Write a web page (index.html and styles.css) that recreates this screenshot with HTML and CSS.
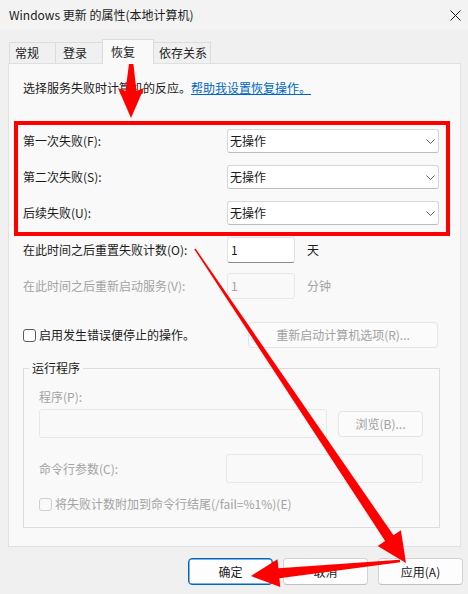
FILE: index.html
```html
<!DOCTYPE html>
<html lang="zh-CN">
<head>
<meta charset="utf-8">
<title>Windows 更新 的属性(本地计算机)</title>
<link rel="stylesheet" href="styles.css">
</head>
<body>
<div class="window">
  <div class="titlebar">
    <span class="title">Windows 更新 的属性(本地计算机)</span>
    <svg class="close" width="11" height="11" viewBox="0 0 11 11"><path d="M0.5 0.5L10.5 10.5M10.5 0.5L0.5 10.5" stroke="#1b1b1b" stroke-width="1" fill="none"/></svg>
  </div>
  <div class="content">
    <div class="tabs">
      <div class="tab t1">常规</div>
      <div class="tab t2">登录</div>
      <div class="tab t3 active">恢复</div>
      <div class="tab t4">依存关系</div>
    </div>
    <div class="panel">
      <div class="intro">选择服务失败时计算机的反应。<a class="link">帮助我设置恢复操作。</a></div>
      <div class="fails">
        <div class="row">
          <span class="label">第一次失败(F):</span>
          <div class="select"><span>无操作</span><svg class="chev" width="9" height="5" viewBox="0 0 9 5"><path d="M0.5 0.5L4.5 4.5L8.5 0.5" stroke="#5f5f5f" stroke-width="1" fill="none"/></svg></div>
        </div>
        <div class="row">
          <span class="label">第二次失败(S):</span>
          <div class="select"><span>无操作</span><svg class="chev" width="9" height="5" viewBox="0 0 9 5"><path d="M0.5 0.5L4.5 4.5L8.5 0.5" stroke="#5f5f5f" stroke-width="1" fill="none"/></svg></div>
        </div>
        <div class="row">
          <span class="label">后续失败(U):</span>
          <div class="select"><span>无操作</span><svg class="chev" width="9" height="5" viewBox="0 0 9 5"><path d="M0.5 0.5L4.5 4.5L8.5 0.5" stroke="#5f5f5f" stroke-width="1" fill="none"/></svg></div>
        </div>
      </div>
      <div class="nums">
        <div class="row">
          <span class="label">在此时间之后重置失败计数(O):</span>
          <div class="input">1</div>
          <span class="unit">天</span>
        </div>
        <div class="row disabled">
          <span class="label">在此时间之后重新启动服务(V):</span>
          <div class="input dis">1</div>
          <span class="unit">分钟</span>
        </div>
      </div>
      <div class="checkrow">
        <div class="check"><span class="box"></span><span>启用发生错误便停止的操作。</span></div>
        <div class="btn restart">重新启动计算机选项(R)...</div>
      </div>
      <fieldset class="group">
        <legend>运行程序</legend>
        <div class="glabel">程序(P):</div>
        <div class="progrow">
          <div class="input dis prog"></div>
          <div class="btn browse">浏览(B)...</div>
        </div>
        <div class="cmdrow">
          <span class="cmdlabel">命令行参数(C):</span>
          <div class="input dis cmd"></div>
        </div>
        <div class="check dcheck"><span class="box"></span><span>将失败计数附加到命令行结尾(/fail=%1%)(E)</span></div>
      </fieldset>
    </div>
    <div class="buttons">
      <div class="btn dlg ok">确定</div>
      <div class="btn dlg">取消</div>
      <div class="btn dlg">应用(A)</div>
    </div>
  </div>
  <div class="redbox"></div>
  <svg class="arrows" width="468" height="594" viewBox="0 0 468 594">
    <polygon points="130,56 132.5,56 136.5,91 144,88 131,118 118,88 125.5,91" fill="#ff0000"/>
    <polygon points="195.6,248.6 393.5,535.3 400.9,530.3 406,563 377.7,545.9 385.1,540.9 194.4,249.4" fill="#ff0000"/>
    <polygon points="400.1,562.2 279.4,578.2 280.3,587.1 251,576 277.5,559.3 278.4,568.2 399.9,559.8" fill="#ff0000"/>
  </svg>
</div>
</body>
</html>
```
FILE: styles.css
```css
* { box-sizing: border-box; }
html, body { margin: 0; padding: 0; }
body {
  width: 468px;
  height: 594px;
  overflow: hidden;
  background: #f0f0f0;
  font-family: "Noto Sans CJK SC", "Microsoft YaHei", sans-serif;
  font-size: 12px;
  line-height: 16px;
  color: #1b1b1b;
}
.window { position: relative; width: 468px; height: 594px; }

.titlebar {
  height: 30px;
  background: #f3f3f3;
  display: flex;
  align-items: center;
  justify-content: space-between;
  padding: 0 7px 0 9px;
}
.title { font-size: 12px; }

.content { padding: 9px 6px 0 8px; }

.tabs {
  display: flex;
  align-items: flex-end;
  height: 24px;
  margin-left: 1px;
}
.tab {
  height: 21px;
  line-height: 20px;
  border-top: 1px solid #dcdcdc;
  border-right: 1px solid #dcdcdc;
  background: #f0f0f0;
  white-space: nowrap;
}
.t1 { width: 47px; border-left: 1px solid #dcdcdc; padding-left: 5px; }
.t2 { width: 47px; padding-left: 7px; }
.t3 { width: 52px; margin-left: -1px; padding-left: 8px; }
.t4 { width: 57px; padding-left: 5px; }
.tab.active {
  position: relative;
  z-index: 1;
  height: 25px;
  margin-bottom: -1px;
  background: #f9f9f9;
  border-left: 1px solid #dcdcdc;
  line-height: 24px;
  padding-bottom: 1px;
}

.panel {
  height: 484px;
  margin-right: 1px;
  border: 1px solid #e0e0e0;
  background: #f9f9f9;
  padding: 0 0 0 14px;
  display: flex;
  flex-direction: column;
}
.intro { margin-top: 16px; height: 16px; white-space: nowrap; }
.link { color: #0067c0; text-decoration: underline; }

.row { display: flex; align-items: center; }
.label { width: 204px; white-space: nowrap; }

.fails { margin-top: 33px; display: flex; flex-direction: column; gap: 12px; }
.select {
  width: 212px;
  height: 24px;
  background: #ffffff;
  border: 1px solid #d6d6d6;
  border-bottom-color: #bdbdbd;
  border-radius: 3px;
  display: flex;
  align-items: center;
  justify-content: space-between;
  padding: 0 3px 0 2px;
}

.nums { margin-top: 12px; display: flex; flex-direction: column; gap: 10px; }
.input {
  width: 68px;
  height: 26px;
  background: #ffffff;
  border: 1px solid #e3e3e3;
  border-bottom: 1px solid #8a8a8a;
  border-radius: 3px;
  padding: 4px 0 0 3px;
  line-height: 16px;
}
.input.dis {
  background: #f9f9f9;
  border: 1px solid #e8e8e8;
  color: #a3a3a3;
}
.unit { margin-left: 12px; }
.disabled { color: #a3a3a3; }

.checkrow {
  margin-top: 23px;
  width: 415px;
  display: flex;
  align-items: center;
  justify-content: space-between;
}
.check { display: flex; align-items: center; white-space: nowrap; }
.box {
  width: 13px;
  height: 13px;
  border: 1px solid #5c5c5c;
  border-radius: 3px;
  background: #ffffff;
  margin-right: 3px;
}
.btn {
  height: 26px;
  display: flex;
  align-items: center;
  justify-content: center;
  background: #fbfbfb;
  border: 1px solid #e4e4e4;
  border-radius: 4px;
  white-space: nowrap;
}
.restart { width: 190px; color: #a0a0a0; }

.group {
  margin: 12px 0 0 0;
  width: 417px;
  min-width: 0;
  border: 1px solid #dcdcdc;
  padding: 13px 15px 15px 15px;
}
.group legend {
  margin-left: -10px;
  padding: 0 3px;
  line-height: 16px;
}
.glabel { color: #a3a3a3; height: 16px; }
.progrow { margin-top: 4px; display: flex; align-items: center; height: 29px; gap: 11px; }
.input.prog { width: 288px; height: 29px; }
.browse { width: 85px; color: #a0a0a0; }
.cmdrow { margin-top: 16px; display: flex; align-items: center; height: 29px; }
.cmdlabel { width: 187px; color: #a3a3a3; white-space: nowrap; }
.input.cmd { width: 197px; height: 29px; }
.dcheck { margin-top: 13px; height: 16px; color: #a3a3a3; }
.dcheck .box { border-color: #cfcfcf; background: #f9f9f9; }

.buttons {
  margin-top: 11px;
  display: flex;
  justify-content: flex-end;
  gap: 10px;
  margin-right: -1px;
}
.dlg {
  width: 85px;
  height: 27px;
  background: #fdfdfd;
  border: 1px solid #d3d3d3;
  border-bottom-color: #c0c0c0;
}
.ok { border: 1px solid #0067c0; box-shadow: inset 0 0 0 0.5px #0067c0; }

.redbox {
  position: absolute;
  left: 14px;
  top: 121px;
  width: 436px;
  height: 115px;
  border: 4px solid #ff0000;
  pointer-events: none;
}
.arrows {
  position: absolute;
  left: 0;
  top: 0;
  pointer-events: none;
}
```
